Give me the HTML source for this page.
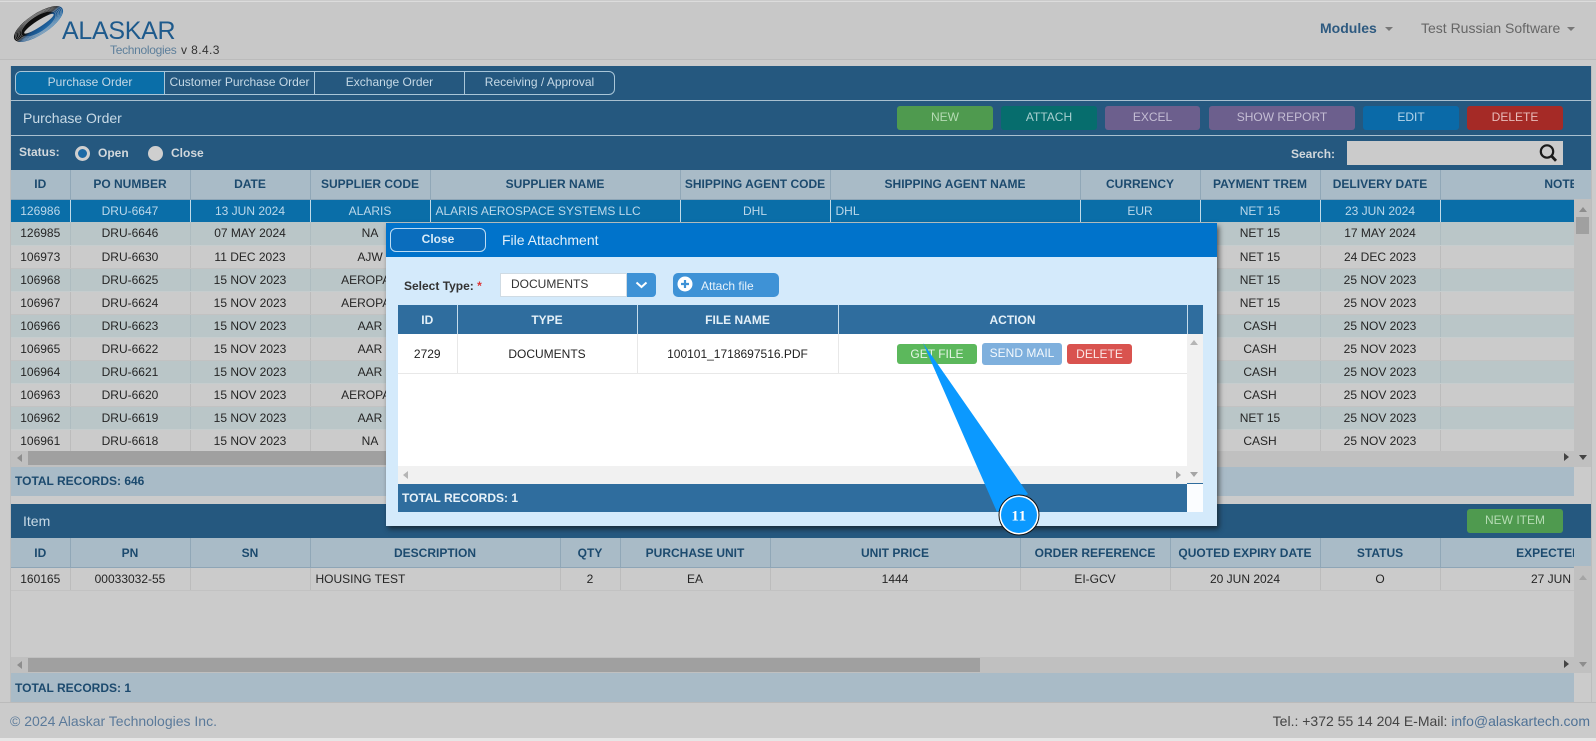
<!DOCTYPE html>
<html><head><meta charset="utf-8"><title>Purchase Order</title>
<style>
html,body{margin:0;padding:0}
body{width:1596px;height:741px;position:relative;overflow:hidden;background:#cbcbcb;font:12px "Liberation Sans",Arial,sans-serif;color:#222}
.a{position:absolute}
.t{position:absolute;white-space:nowrap;line-height:16px}
.b{position:absolute;height:24px;line-height:22px;text-align:center;border-radius:3px;font-size:12px}
table{border-collapse:collapse;table-layout:fixed;position:absolute;left:0;top:0}
td,th{padding:0;text-align:center;overflow:hidden;white-space:nowrap;box-sizing:border-box;font-size:12px}
.g th{height:29px;background:#a9bbc7;color:#1c4a6e;border-right:1px solid #90a7b7;border-bottom:1px solid #8ea5b6;font-weight:bold}
.g td{height:23px;border-right:1px solid #bcbcbc;border-bottom:1px solid #c2c2c2;color:#252525;line-height:22px}
.g tr.o td{background:#bac6c8;border-right-color:#aebcc0;border-bottom-color:#c6cdce}
.g tr.e td{background:#cbcbcb}
.g tr.s td{background:#0a6ea8;color:#bcd8ea;border-right:1px solid #c0dbe9;border-bottom:0}
.it th{padding-top:2px}
.l{text-align:left!important;padding-left:5px!important}
.ar{position:absolute;width:0;height:0}
.au{border-left:4px solid transparent;border-right:4px solid transparent;border-bottom:5px solid #8d8d8d}
.ad{border-left:4px solid transparent;border-right:4px solid transparent;border-top:5px solid #444}
.al{border-top:4px solid transparent;border-bottom:4px solid transparent;border-right:5px solid #8d8d8d}
.arr{border-top:4px solid transparent;border-bottom:4px solid transparent;border-left:5px solid #444}
.m th{background:#2f6d9e;color:#e4f0f8;font-weight:bold;height:29px;border-right:1px solid #c5dcec}
.m td{height:39px;background:#fff;border-right:1px solid #e8e8e8;border-bottom:1px solid #e8e8e8;color:#222;padding-top:2px}
</style></head><body>

<!-- top header -->
<div class="a" style="left:0;top:1px;width:1596px;height:59px;background:#c8c8c8;border-top:1px solid #dcdcdc;border-bottom:1px solid #bbb;box-sizing:border-box"></div>
<svg class="a" style="left:8px;top:4px" width="64" height="40" viewBox="0 0 64 40">
<defs><linearGradient id="lg" x1="0.1" y1="0" x2="0.5" y2="1"><stop offset="0" stop-color="#0a0a0a"/><stop offset=".52" stop-color="#111"/><stop offset=".64" stop-color="#174d84"/><stop offset="1" stop-color="#2474b4"/></linearGradient></defs>
<g transform="rotate(-33 30.500 20)">
<ellipse cx="30.500" cy="20" rx="28.500" ry="10.500" fill="url(#lg)"/>
<g fill="none" stroke="#c8c8c8" stroke-width=".55" stroke-opacity=".6">
<ellipse cx="30.500" cy="20" rx="27" ry="10"/>
<ellipse cx="30.500" cy="20" rx="25.300" ry="9.500"/>
<ellipse cx="30.500" cy="20" rx="23.600" ry="9"/>
<ellipse cx="30.500" cy="20" rx="21.900" ry="8.500"/>
<ellipse cx="30.500" cy="20" rx="20.200" ry="8"/>
</g>
<ellipse cx="31" cy="20" rx="17.500" ry="3.200" fill="#c8c8c8"/>
</g>
</svg>
<div class="t" style="left:62px;top:17px;font-size:25px;line-height:28px;letter-spacing:-.3px;color:#1e5a8c">ALASKAR</div>
<div class="t" style="left:110px;top:42px;color:#5d7f9b;letter-spacing:-.3px">Technologies</div>
<div class="t" style="left:181px;top:42px;color:#333;letter-spacing:.4px">v 8.4.3</div>
<div class="t" style="left:1320px;top:20px;font-size:14px;font-weight:bold;color:#2e5a80">Modules</div>
<div class="ar" style="left:1385px;top:27px;border-left:4px solid transparent;border-right:4px solid transparent;border-top:4px solid #777"></div>
<div class="t" style="left:1421px;top:20px;font-size:14px;color:#666">Test Russian Software</div>
<div class="ar" style="left:1567px;top:27px;border-left:4px solid transparent;border-right:4px solid transparent;border-top:4px solid #777"></div>

<!-- main panel -->
<div class="a" style="left:11px;top:66px;width:1580px;height:104px;background:#25587f"></div>
<div class="a" style="left:11px;top:100px;width:1580px;height:1px;background:#a9c0d0"></div>
<div class="a" style="left:11px;top:135px;width:1580px;height:1px;background:#a9c0d0"></div>

<!-- tabs -->
<div class="a" style="left:15px;top:71px;width:600px;height:24px;border:1px solid #a9c6d8;border-radius:6px;box-sizing:border-box;overflow:hidden;color:#c5d9e6;line-height:20px;text-align:center">
<div class="a" style="left:0;top:0;width:148px;height:22px;background:#0a6ea8;border-right:1px solid #a9c6d8">Purchase Order</div>
<div class="a" style="left:149px;top:0;width:149px;height:22px;border-right:1px solid #a9c6d8">Customer Purchase Order</div>
<div class="a" style="left:299px;top:0;width:149px;height:22px;border-right:1px solid #a9c6d8">Exchange Order</div>
<div class="a" style="left:449px;top:0;width:149px;height:22px">Receiving / Approval</div>
</div>

<div class="t" style="left:23px;top:110px;font-size:14px;color:#c8dae6">Purchase Order</div>

<div class="b" style="left:897px;top:106px;width:96px;background:#4f9a4f;color:#b6dcb4">NEW</div>
<div class="b" style="left:1001px;top:106px;width:96px;background:#066d6d;color:#a9d0d0">ATTACH</div>
<div class="b" style="left:1105px;top:106px;width:95px;background:#6c5f8d;color:#c4bdd4">EXCEL</div>
<div class="b" style="left:1209px;top:106px;width:146px;background:#6c5f8d;color:#c4bdd4">SHOW REPORT</div>
<div class="b" style="left:1363px;top:106px;width:96px;background:#0a6aa8;color:#b8d6ea">EDIT</div>
<div class="b" style="left:1467px;top:106px;width:96px;background:#a52a26;color:#e8bdbb">DELETE</div>

<div class="t" style="left:19px;top:144px;font-weight:bold;color:#d2d8dc">Status:</div>
<div class="a" style="left:75px;top:146px;width:15px;height:15px;border-radius:50%;background:#1c6aa6;border:3.500px solid #cfcfcf;box-sizing:border-box"></div>
<div class="t" style="left:98px;top:145px;font-weight:bold;color:#d2d8dc">Open</div>
<div class="a" style="left:148px;top:146px;width:15px;height:15px;border-radius:50%;background:#cfcfcf"></div>
<div class="t" style="left:171px;top:145px;font-weight:bold;color:#d2d8dc">Close</div>
<div class="t" style="left:1291px;top:146px;font-weight:bold;color:#d2d8dc">Search:</div>
<div class="a" style="left:1347px;top:141px;width:216px;height:24px;background:#cbcbcb"></div>
<svg class="a" style="left:1537px;top:143px" width="22" height="20" viewBox="0 0 22 20"><circle cx="10" cy="8.500" r="6.200" fill="none" stroke="#1a1a1a" stroke-width="2.200"/><path d="M14.500 13L19 17.800" stroke="#1a1a1a" stroke-width="2.800"/></svg>

<!-- main grid -->
<div class="a" style="left:1574px;top:170px;width:17px;height:29px;background:#a9bbc7"></div>
<div class="a" style="left:11px;top:170px;width:1563px;height:281px;overflow:hidden">
<table class="g" style="width:1671px">
<colgroup><col style="width:59px"><col style="width:120px"><col style="width:120px"><col style="width:120px"><col style="width:250px"><col style="width:150px"><col style="width:250px"><col style="width:120px"><col style="width:120px"><col style="width:120px"><col style="width:242px"></colgroup>
<tr><th>ID</th><th>PO NUMBER</th><th>DATE</th><th>SUPPLIER CODE</th><th>SUPPLIER NAME</th><th>SHIPPING AGENT CODE</th><th>SHIPPING AGENT NAME</th><th>CURRENCY</th><th>PAYMENT TREM</th><th>DELIVERY DATE</th><th>NOTE</th></tr>
<tr class="s"><td>126986</td><td>DRU-6647</td><td>13 JUN 2024</td><td>ALARIS</td><td class="l">ALARIS AEROSPACE SYSTEMS LLC</td><td>DHL</td><td class="l">DHL</td><td>EUR</td><td>NET 15</td><td>23 JUN 2024</td><td></td></tr>
<tr class="o"><td>126985</td><td>DRU-6646</td><td>07 MAY 2024</td><td>NA</td><td></td><td></td><td></td><td></td><td>NET 15</td><td>17 MAY 2024</td><td></td></tr>
<tr class="e"><td>106973</td><td>DRU-6630</td><td>11 DEC 2023</td><td>AJW</td><td></td><td></td><td></td><td></td><td>NET 15</td><td>24 DEC 2023</td><td></td></tr>
<tr class="o"><td>106968</td><td>DRU-6625</td><td>15 NOV 2023</td><td>AEROPAC</td><td></td><td></td><td></td><td></td><td>NET 15</td><td>25 NOV 2023</td><td></td></tr>
<tr class="e"><td>106967</td><td>DRU-6624</td><td>15 NOV 2023</td><td>AEROPAC</td><td></td><td></td><td></td><td></td><td>NET 15</td><td>25 NOV 2023</td><td></td></tr>
<tr class="o"><td>106966</td><td>DRU-6623</td><td>15 NOV 2023</td><td>AAR</td><td></td><td></td><td></td><td></td><td>CASH</td><td>25 NOV 2023</td><td></td></tr>
<tr class="e"><td>106965</td><td>DRU-6622</td><td>15 NOV 2023</td><td>AAR</td><td></td><td></td><td></td><td></td><td>CASH</td><td>25 NOV 2023</td><td></td></tr>
<tr class="o"><td>106964</td><td>DRU-6621</td><td>15 NOV 2023</td><td>AAR</td><td></td><td></td><td></td><td></td><td>CASH</td><td>25 NOV 2023</td><td></td></tr>
<tr class="e"><td>106963</td><td>DRU-6620</td><td>15 NOV 2023</td><td>AEROPAC</td><td></td><td></td><td></td><td></td><td>CASH</td><td>25 NOV 2023</td><td></td></tr>
<tr class="o"><td>106962</td><td>DRU-6619</td><td>15 NOV 2023</td><td>AAR</td><td></td><td></td><td></td><td></td><td>NET 15</td><td>25 NOV 2023</td><td></td></tr>
<tr class="e"><td>106961</td><td>DRU-6618</td><td>15 NOV 2023</td><td>NA</td><td></td><td></td><td></td><td></td><td>CASH</td><td>25 NOV 2023</td><td></td></tr>
</table>
</div>
<!-- main scrollbars -->
<div class="a" style="left:1574px;top:199px;width:17px;height:252px;background:#c0c0c0"></div>
<div class="ar au" style="left:1579px;top:207px"></div>
<div class="a" style="left:1576px;top:217px;width:13px;height:17px;background:#a0a0a0"></div>
<div class="a" style="left:11px;top:451px;width:1580px;height:16px;background:#c0c0c0"></div>
<div class="a" style="left:28px;top:451px;width:370px;height:14px;background:#a0a0a0"></div>
<div class="ar al" style="left:17px;top:454px"></div>
<div class="ar arr" style="left:1564px;top:453px"></div>
<div class="ar ad" style="left:1579px;top:455px"></div>
<div class="a" style="left:11px;top:467px;width:1563px;height:29px;background:#a9bbc7"></div>
<div class="t" style="left:15px;top:473px;font-weight:bold;color:#1c4a6e">TOTAL RECORDS: 646</div>

<!-- item panel -->
<div class="a" style="left:11px;top:504px;width:1580px;height:34px;background:#25587f"></div>
<div class="t" style="left:23px;top:513px;font-size:14px;color:#c8dae6">Item</div>
<div class="b" style="left:1467px;top:509px;width:96px;background:#4f9a4f;color:#b6dcb4">NEW ITEM</div>
<div class="a" style="left:1574px;top:538px;width:17px;height:28px;background:#a9bbc7"></div>
<div class="a" style="left:11px;top:538px;width:1563px;height:120px;overflow:hidden">
<table class="g it" style="width:1681px">
<colgroup><col style="width:59px"><col style="width:120px"><col style="width:120px"><col style="width:250px"><col style="width:60px"><col style="width:150px"><col style="width:250px"><col style="width:150px"><col style="width:150px"><col style="width:120px"><col style="width:252px"></colgroup>
<tr><th>ID</th><th>PN</th><th>SN</th><th>DESCRIPTION</th><th>QTY</th><th>PURCHASE UNIT</th><th>UNIT PRICE</th><th>ORDER REFERENCE</th><th>QUOTED EXPIRY DATE</th><th>STATUS</th><th>EXPECTED DATE</th></tr>
<tr class="e"><td>160165</td><td>00033032-55</td><td></td><td class="l">HOUSING TEST</td><td>2</td><td>EA</td><td>1444</td><td>EI-GCV</td><td>20 JUN 2024</td><td>O</td><td>27 JUN 2024</td></tr>
</table>
</div>
<div class="a" style="left:1574px;top:566px;width:17px;height:92px;background:#c0c0c0"></div>
<div class="ar" style="left:1579px;top:575px;border-left:4px solid transparent;border-right:4px solid transparent;border-bottom:5px solid #a5a5a5"></div>
<div class="a" style="left:11px;top:657px;width:1580px;height:16px;background:#c0c0c0"></div>
<div class="a" style="left:28px;top:658px;width:952px;height:14px;background:#a0a0a0"></div>
<div class="ar al" style="left:17px;top:661px"></div>
<div class="ar arr" style="left:1564px;top:660px"></div>
<div class="ar" style="left:1579px;top:662px;border-left:4px solid transparent;border-right:4px solid transparent;border-top:5px solid #8d8d8d"></div>
<div class="a" style="left:11px;top:673px;width:1563px;height:29px;background:#a9bbc7"></div>
<div class="t" style="left:15px;top:680px;font-weight:bold;color:#1c4a6e">TOTAL RECORDS: 1</div>
<div class="a" style="left:10px;top:66px;width:1px;height:636px;background:#bdbdbd"></div>
<div class="a" style="left:1591px;top:66px;width:1px;height:636px;background:#bdbdbd"></div>

<!-- footer -->
<div class="a" style="left:0;top:702px;width:1596px;height:36px;background:#cbcbcb;border-top:1px solid #bbb;box-sizing:border-box"></div>
<div class="a" style="left:0;top:738px;width:1596px;height:3px;background:#e6e6e6"></div>
<div class="t" style="left:10px;top:713px;font-size:14px;color:#5b7a9a">© 2024 Alaskar Technologies Inc.</div>
<div class="t" style="right:6px;top:713px;font-size:14px;color:#444">Tel.: +372 55 14 204 E-Mail: <span style="color:#4f7296">info@alaskartech.com</span></div>

<!-- modal -->
<div class="a" style="left:386px;top:223px;width:831px;height:303px;background:#d4eafb;box-shadow:2px 3px 5px rgba(20,20,20,.65)"></div>
<div class="a" style="left:386px;top:223px;width:831px;height:34px;background:#0073cb"></div>
<div class="a" style="left:390px;top:228px;width:96px;height:24px;border:1px solid #bcdcf3;border-radius:6px;box-sizing:border-box;text-align:center;line-height:20px;color:#d8ebf8;font-weight:bold;background:#0a6dbd">Close</div>
<div class="t" style="left:502px;top:232px;font-size:14px;color:#e2f0fa">File Attachment</div>
<div class="t" style="left:404px;top:278px;font-weight:bold;color:#333">Select Type: <span style="color:#d33">*</span></div>
<div class="a" style="left:500px;top:273px;width:127px;height:24px;background:#fff;border:1px solid #cfdbe4;box-sizing:border-box;line-height:21px;padding-left:10px;color:#333">DOCUMENTS</div>
<div class="a" style="left:627px;top:273px;width:29px;height:24px;background:#3e92d6;border-radius:0 4px 4px 0"></div>
<svg class="a" style="left:634px;top:280px" width="15" height="10" viewBox="0 0 15 10"><path d="M2.500 2.500L7.500 7L12.500 2.500" fill="none" stroke="#fff" stroke-width="2"/></svg>
<div class="a" style="left:673px;top:273px;width:106px;height:24px;background:#3e92d6;border-radius:5px"></div>
<svg class="a" style="left:677px;top:276px" width="16" height="16" viewBox="0 0 16 16"><circle cx="8" cy="8" r="7.500" fill="#fff"/><path d="M8 4V12M4 8H12" stroke="#3e92d6" stroke-width="2.200"/></svg>
<div class="t" style="left:701px;top:278px;color:#e6f2fb">Attach file</div>

<div class="a" style="left:398px;top:305px;width:805px;height:29px;background:#2f6d9e"></div>
<div class="a" style="left:398px;top:305px;width:789px;height:161px;overflow:hidden;background:#fff">
<table class="m" style="width:789px">
<colgroup><col style="width:59px"><col style="width:180px"><col style="width:201px"><col style="width:349px"></colgroup>
<tr><th>ID</th><th>TYPE</th><th>FILE NAME</th><th>ACTION</th></tr>
<tr><td>2729</td><td>DOCUMENTS</td><td>100101_1718697516.PDF</td><td></td></tr>
</table>
</div>
<div class="a" style="left:1187px;top:305px;width:1px;height:29px;background:#c5dcec"></div>
<div class="b" style="left:897px;top:344px;width:80px;height:20px;line-height:21px;background:#5cb85c;color:#e6f5e6">GET FILE</div>
<div class="b" style="left:982px;top:343px;width:80px;height:22px;line-height:20px;background:#7fb0dd;color:#f4f9fd">SEND MAIL</div>
<div class="b" style="left:1067px;top:344px;width:65px;height:20px;line-height:21px;background:#d9534f;color:#fbe6e5">DELETE</div>

<div class="a" style="left:1187px;top:334px;width:16px;height:150px;background:#f1f1f1"></div>
<div class="a" style="left:398px;top:466px;width:805px;height:18px;background:#f1f1f1"></div>
<div class="ar" style="left:1190px;top:340px;border-left:4px solid transparent;border-right:4px solid transparent;border-bottom:5px solid #b5b5b5"></div>
<div class="ar" style="left:1190px;top:472px;border-left:4px solid transparent;border-right:4px solid transparent;border-top:5px solid #a5a5a5"></div>
<div class="ar" style="left:1176px;top:471px;border-top:4px solid transparent;border-bottom:4px solid transparent;border-left:5px solid #a5a5a5"></div>
<div class="ar" style="left:403px;top:471px;border-top:4px solid transparent;border-bottom:4px solid transparent;border-right:5px solid #b5b5b5"></div>
<div class="a" style="left:398px;top:484px;width:789px;height:28px;background:#2f6d9e"></div>
<div class="a" style="left:1187px;top:483px;width:16px;height:1px;background:#2f6d9e"></div>
<div class="a" style="left:1187px;top:484px;width:16px;height:28px;background:#fbfdff"></div>
<div class="t" style="left:402px;top:490px;font-weight:bold;color:#e8f2f9">TOTAL RECORDS: 1</div>

<!-- callout -->
<svg class="a" style="left:0;top:0" width="1596" height="741" viewBox="0 0 1596 741">
<polygon points="923,343 997,512 1028,494" fill="#0b99ff"/>
<circle cx="1019" cy="515" r="20" fill="#fff" stroke="#111" stroke-width="1"/>
<circle cx="1019" cy="515" r="18" fill="#0b99ff"/>
<text x="1019" y="520.500" text-anchor="middle" font-family="'Liberation Serif',serif" font-weight="bold" font-size="15" fill="#fff" letter-spacing=".5">11</text>
</svg>
</body></html>
